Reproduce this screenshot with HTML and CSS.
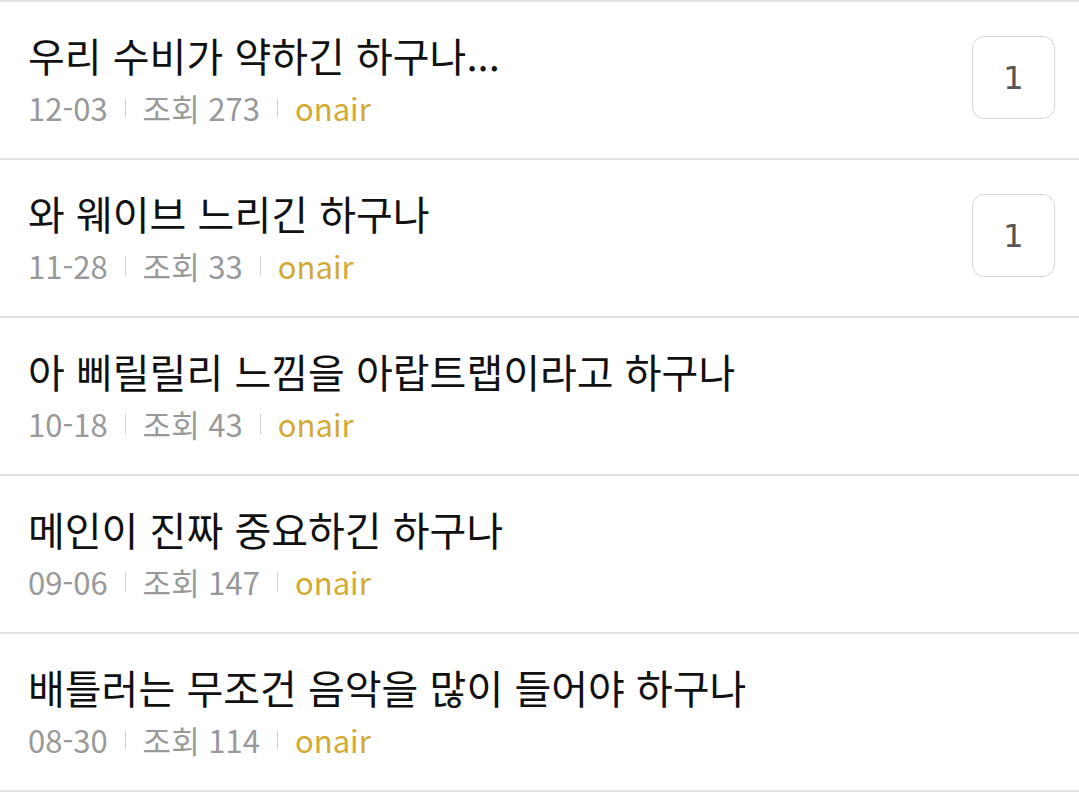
FILE: index.html
```html
<!DOCTYPE html>
<html lang="ko">
<head>
    <meta charset="UTF-8">
    <meta name="viewport" content="width=device-width, initial-scale=1.0">
    <title>게시글 목록</title>
    <link rel="stylesheet" href="styles.css">
</head>
<body>

    <ul class="post-list">
        <li class="post">
            <div class="post-body">
                <div class="post-title">우리 수비가 약하긴 하구나...</div>
                <div class="post-meta">
                    <span>12-03</span>
                    <span class="sep"></span>
                    <span>조회 273</span>
                    <span class="sep"></span>
                    <span class="author">onair</span>
                </div>
            </div>
            <div class="comment-count">1</div>
        </li>
        <li class="post">
            <div class="post-body">
                <div class="post-title">와 웨이브 느리긴 하구나</div>
                <div class="post-meta">
                    <span>11-28</span>
                    <span class="sep"></span>
                    <span>조회 33</span>
                    <span class="sep"></span>
                    <span class="author">onair</span>
                </div>
            </div>
            <div class="comment-count">1</div>
        </li>
        <li class="post">
            <div class="post-body">
                <div class="post-title">아 삐릴릴리 느낌을 아랍트랩이라고 하구나</div>
                <div class="post-meta">
                    <span>10-18</span>
                    <span class="sep"></span>
                    <span>조회 43</span>
                    <span class="sep"></span>
                    <span class="author">onair</span>
                </div>
            </div>
        </li>
        <li class="post">
            <div class="post-body">
                <div class="post-title">메인이 진짜 중요하긴 하구나</div>
                <div class="post-meta">
                    <span>09-06</span>
                    <span class="sep"></span>
                    <span>조회 147</span>
                    <span class="sep"></span>
                    <span class="author">onair</span>
                </div>
            </div>
        </li>
        <li class="post">
            <div class="post-body">
                <div class="post-title">배틀러는 무조건 음악을 많이 들어야 하구나</div>
                <div class="post-meta">
                    <span>08-30</span>
                    <span class="sep"></span>
                    <span>조회 114</span>
                    <span class="sep"></span>
                    <span class="author">onair</span>
                </div>
            </div>
        </li>
    </ul>

</body>
</html>
```

FILE: styles.css
```css
body {
    margin: 0;
    background: #fff;
    font-family: "Noto Sans CJK KR", "Noto Sans", sans-serif;
}

.post-list {
    list-style: none;
    margin: 0;
    padding: 0;
    border-top: 2px solid #e2e2e2;
}

.post {
    display: flex;
    align-items: center;
    height: 156px;
    padding: 0 24px 0 28px;
    border-bottom: 2px solid #e2e2e2;
}

.post-body {
    flex: 1;
    min-width: 0;
    margin-bottom: 4px;
}

.post-title {
    font-size: 40px;
    line-height: 52px;
    color: #111;
    white-space: nowrap;
}

.post-meta {
    display: flex;
    align-items: center;
    margin-top: 7px;
    font-size: 31px;
    line-height: 40px;
    color: #999;
}

.sep {
    width: 1px;
    height: 20px;
    margin: 0 17px;
    background: #d4d4d4;
}

.author {
    color: #d2a933;
}

.comment-count {
    width: 81px;
    height: 81px;
    margin-bottom: 5px;
    border: 1.5px solid #d6d6d6;
    border-radius: 12px;
    display: flex;
    align-items: center;
    justify-content: center;
    font-family: "DejaVu Sans", sans-serif;
    font-size: 32px;
    color: #555;
}
```
